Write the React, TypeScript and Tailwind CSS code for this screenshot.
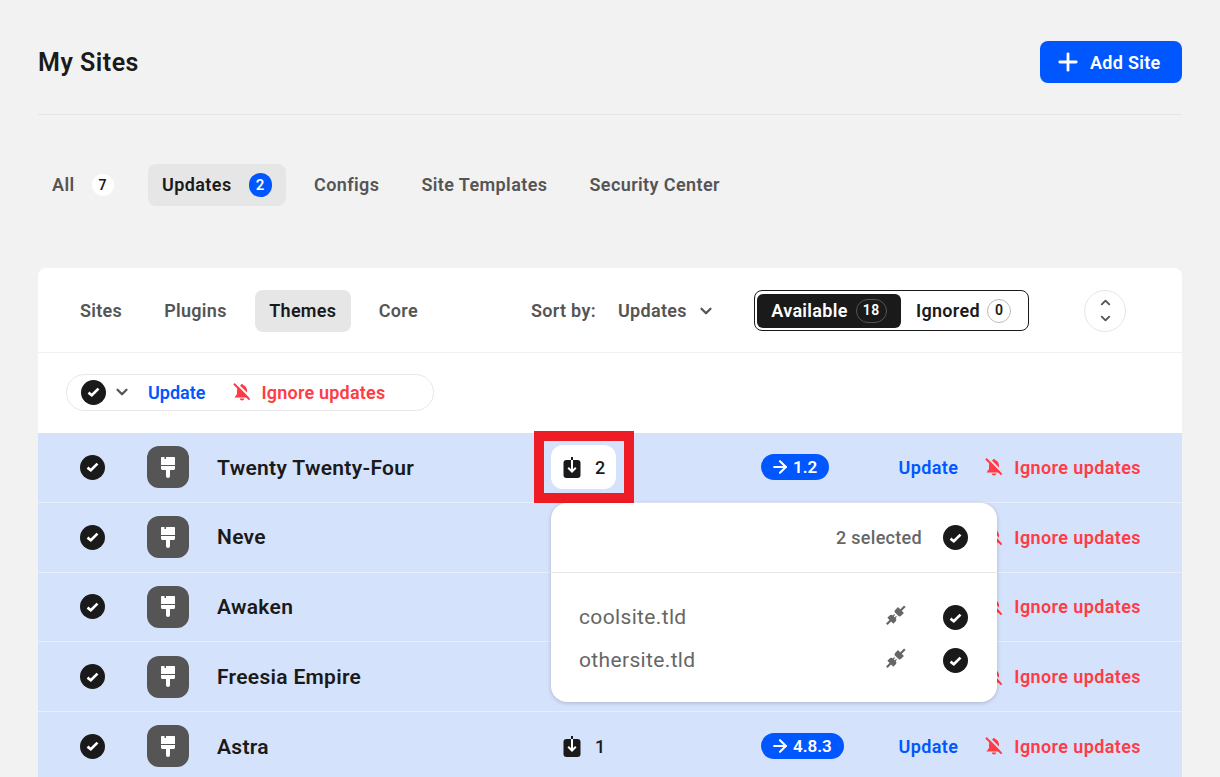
import { ArrowRight, ChevronDown, ChevronUp, Plus } from 'lucide-react';

const themes = [
  { name: 'Twenty Twenty-Four', count: 2, version: '1.2', open: true },
  { name: 'Neve', count: 1, version: '3.8.2', covered: true },
  { name: 'Awaken', count: 1, version: '2.0', covered: true },
  { name: 'Freesia Empire', count: 1, version: '1.4', covered: true },
  { name: 'Astra', count: 1, version: '4.8.3' },
];

function CheckCircle() {
  return (
    <span className="flex h-[25px] w-[25px] shrink-0 items-center justify-center rounded-full bg-[#1a1a1a]">
      <svg width="13" height="10" viewBox="0 0 13 10" fill="none">
        <path d="M1.5 5.6L4.8 8.2L11.5 1.6" stroke="white" strokeWidth="2.7" />
      </svg>
    </span>
  );
}

function BrushIcon() {
  return (
    <svg width="14" height="21" viewBox="0 0 14 21" fill="white">
      <path d="M0 1C0 .4 .4 0 1 0H3.5V2H5V0H13C13.6 0 14 .4 14 1V8H0Z" />
      <path d="M0 9H14V11.5C14 12.3 13.3 13 12.5 13H1.5C.7 13 0 12.3 0 11.5Z" />
      <path d="M5 13H9V19C9 20.1 8.1 21 7 21C5.9 21 5 20.1 5 19Z" />
    </svg>
  );
}

function InstallIcon() {
  return (
    <svg width="18" height="21" viewBox="0 0 18 21">
      <rect x="0.5" y="3" width="17" height="18" rx="3" fill="#1a1a1a" />
      <path d="M9 0V3" stroke="#1a1a1a" strokeWidth="2" />
      <path d="M9 3V14.5M5.2 10.8L9 14.6L12.8 10.8" stroke="white" strokeWidth="2" fill="none" />
    </svg>
  );
}

function BellOffIcon() {
  return (
    <svg width="18" height="18" viewBox="0 0 18 18" fill="#ff3b45" className="shrink-0">
      <mask id="bell-gap">
        <rect width="18" height="18" fill="white" />
        <path d="M2.8 -0.2L19 16" stroke="black" strokeWidth="2" />
      </mask>
      <g mask="url(#bell-gap)">
        <path d="M9 1C9.6 1 10 1.4 10 2.1C12.6 2.7 14 5 14 7.8V11L16.5 14.6H1.5L4 11V7.8C4 5 5.4 2.7 8 2.1C8 1.4 8.4 1 9 1Z" />
        <path d="M6.8 15.6H11.2C11.2 16.8 10.2 17.6 9 17.6C7.8 17.6 6.8 16.8 6.8 15.6Z" />
      </g>
      <path d="M1 .8L16.6 16.6" stroke="#ff3b45" strokeWidth="2" />
    </svg>
  );
}

function PlugIcon() {
  return (
    <svg width="20" height="20" viewBox="-10 -10 20 20" fill="#666666" className="mb-[6px] mr-[37px] shrink-0">
      <g transform="rotate(-45)">
        <rect x="-13" y="-1.1" width="6" height="2.2" />
        <path d="M-8 -4.2H-4.5C-3.4 -4.2 -2.5 -3.3 -2.5 -2.2V-1.9H-.6V-.7H-2.5V.7H-.6V1.9H-2.5V2.2C-2.5 3.3 -3.4 4.2 -4.5 4.2H-8Z" />
        <path d="M1 -2.2C1 -3.3 1.9 -4.2 3 -4.2H7V4.2H3C1.9 4.2 1 3.3 1 2.2Z" />
        <rect x="6.5" y="-1.1" width="6" height="2.2" />
      </g>
    </svg>
  );
}

function ThemeRow({ name, count, version, open, covered }: { name: string; count: number; version: string; open?: boolean; covered?: boolean }) {
  return (
    <div className="flex h-[69.75px] items-center border-b border-[#e6edfb] bg-[#d5e2fb] pl-[42px] pr-[41px]">
      <CheckCircle />
      <span className="ml-[42px] flex h-[42px] w-[42px] shrink-0 items-center justify-center rounded-xl bg-[#555555]">
        <BrushIcon />
      </span>
      <span className="ml-[28px] w-[334px] shrink-0 pt-[2px] text-[21px] font-semibold tracking-[0.3px] text-[#1a1a1a]">{name}</span>
      <span className={`flex h-[44px] w-[65px] shrink-0 items-center gap-[14px] rounded-xl pl-[12px] text-[18px] font-medium text-[#1a1a1a] ${open ? 'bg-white' : ''} ${covered ? 'invisible' : ''}`}>
        <InstallIcon />
        {count}
      </span>
      <span className={`ml-[145px] flex h-[26px] items-center gap-[3px] rounded-full bg-[#0057ff] pl-[9px] pr-[12px] text-[17px] font-semibold text-white ${covered ? 'invisible' : ''}`}>
        <ArrowRight className="h-[20px] w-[20px]" strokeWidth={2.6} />
        {version}
      </span>
      <span className={`ml-auto text-[18px] font-semibold tracking-[0.4px] text-[#0057ff] ${covered ? 'invisible' : ''}`}>Update</span>
      <span className="ml-[27px] flex items-center gap-[11px] text-[18px] font-semibold tracking-[0.4px] text-[#ff3b45]">
        <BellOffIcon />
        Ignore updates
      </span>
    </div>
  );
}

export default function App() {
  return (
    <div className="relative h-[777px] overflow-hidden bg-[#f2f2f2] px-[38px] font-['Roboto',sans-serif]">
      {/* Header */}
      <div className="flex h-[115px] items-start justify-between border-b border-[#e6e6e6] pt-[41px]">
        <h1 className="mt-[4px] text-[25px] font-semibold leading-9 tracking-[0.5px] text-[#1a1a1a]">My Sites</h1>
        <button className="flex h-[42px] w-[142px] items-center gap-[8px] rounded-lg bg-[#0057ff] pl-[14px] text-[18px] font-semibold tracking-[0.3px] text-white">
          <Plus className="h-[28px] w-[28px]" strokeWidth={2.4} />
          Add Site
        </button>
      </div>

      {/* Tabs */}
      <div className="mt-[49px] flex h-[42px] items-center gap-[14px] text-[18px] font-semibold leading-[40px] tracking-[0.4px] text-[#555555]">
        <span className="flex h-[42px] w-[96px] items-center px-[14px]">
          All
          <span className="ml-[17px] flex h-[22px] w-[22px] items-center justify-center rounded-full bg-white text-[14px] font-semibold text-[#1a1a1a]">7</span>
        </span>
        <span className="flex h-[42px] w-[138px] items-center rounded-lg bg-[#e6e6e6] px-[14px] text-[#1a1a1a]">
          Updates
          <span className="ml-[17px] flex h-[24px] w-[24px] items-center justify-center rounded-full bg-[#0057ff] text-[15px] font-semibold text-white">2</span>
        </span>
        <span className="px-[14px]">Configs</span>
        <span className="px-[14px]">Site Templates</span>
        <span className="px-[14px]">Security Center</span>
      </div>

      {/* Card */}
      <div className="mt-[62px] overflow-hidden rounded-t-lg bg-white">
        <div className="flex h-[85px] items-center border-b border-[#f0f0f0] pl-[28px] pt-[1px] text-[18px] font-semibold tracking-[0.3px] text-[#555555]">
          <div className="flex w-[465px] items-center gap-[14px]">
            <span className="px-[14px]">Sites</span>
            <span className="px-[14px]">Plugins</span>
            <span className="flex h-[42px] w-[96px] items-center justify-center rounded-lg bg-[#e6e6e6] text-[#1a1a1a]">Themes</span>
            <span className="px-[14px]">Core</span>
          </div>
          <span className="w-[87px]">Sort by:</span>
          <span className="w-[79px]">Updates</span>
          <ChevronDown className="h-[18px] w-[18px]" strokeWidth={3} />
          <div className="ml-[39px] flex h-[41px] w-[275px] items-center rounded-lg border border-[#1a1a1a] pl-[2px]">
            <span className="flex h-[34px] w-[144px] items-center justify-center gap-[8px] rounded-md bg-[#1a1a1a] text-white">
              Available
              <span className="flex h-[24px] w-[31px] items-center justify-center rounded-full border border-[#555555] text-[14px]">18</span>
            </span>
            <span className="ml-[15px] flex items-center gap-[7px] text-[#1a1a1a]">
              Ignored
              <span className="flex h-[24px] w-[24px] items-center justify-center rounded-full border border-[#bbbbbb] text-[14px] tracking-normal">0</span>
            </span>
          </div>
          <span className="ml-[55px] flex h-[42px] w-[42px] flex-col items-center justify-center gap-[1px] rounded-full border border-[#e6e6e6]">
            <ChevronUp className="h-[15px] w-[15px]" strokeWidth={3} />
            <ChevronDown className="h-[15px] w-[15px]" strokeWidth={3} />
          </span>
        </div>

        <div className="flex h-[80px] items-center pb-[2px] pl-[28px]">
          <div className="flex h-[37px] w-[368px] items-center rounded-full border border-[#e6e6e6] pl-[14px] text-[18px] font-semibold">
            <CheckCircle />
            <ChevronDown className="ml-[7px] h-[18px] w-[18px] text-[#555555]" strokeWidth={3} />
            <span className="ml-[17px] text-[#0057ff]">Update</span>
            <span className="ml-[28px] flex items-center gap-[10px] tracking-[0.2px] text-[#ff3b45]">
              <BellOffIcon />
              Ignore updates
            </span>
          </div>
        </div>

        {themes.map((t) => (
          <ThemeRow key={t.name} {...t} />
        ))}
      </div>

      {/* Red highlight round the count */}
      <div className="absolute left-[534px] top-[431px] h-[72px] w-[100px] border-[10px] border-[#ee1c25]" />

      {/* Sites dropdown */}
      <div className="absolute left-[551px] top-[503px] h-[199px] w-[446px] rounded-2xl bg-white shadow-[0_1px_4px_rgba(0,0,0,0.2)]">
        <div className="flex h-[70px] items-center justify-end gap-[21px] border-b border-[#e6e6e6] pr-[29px] text-[18px] font-medium tracking-[0.3px] text-[#666666]">
          2 selected
          <CheckCircle />
        </div>
        <div className="flex flex-col gap-[18px] pl-[28px] pr-[29px] pt-[32px] text-[21px] tracking-[0.35px] text-[#666666]">
          {['coolsite.tld', 'othersite.tld'].map((site) => (
            <div key={site} className="flex h-[25px] items-center">
              <span className="flex-1">{site}</span>
              <PlugIcon />
              <CheckCircle />
            </div>
          ))}
        </div>
      </div>
    </div>
  );
}
